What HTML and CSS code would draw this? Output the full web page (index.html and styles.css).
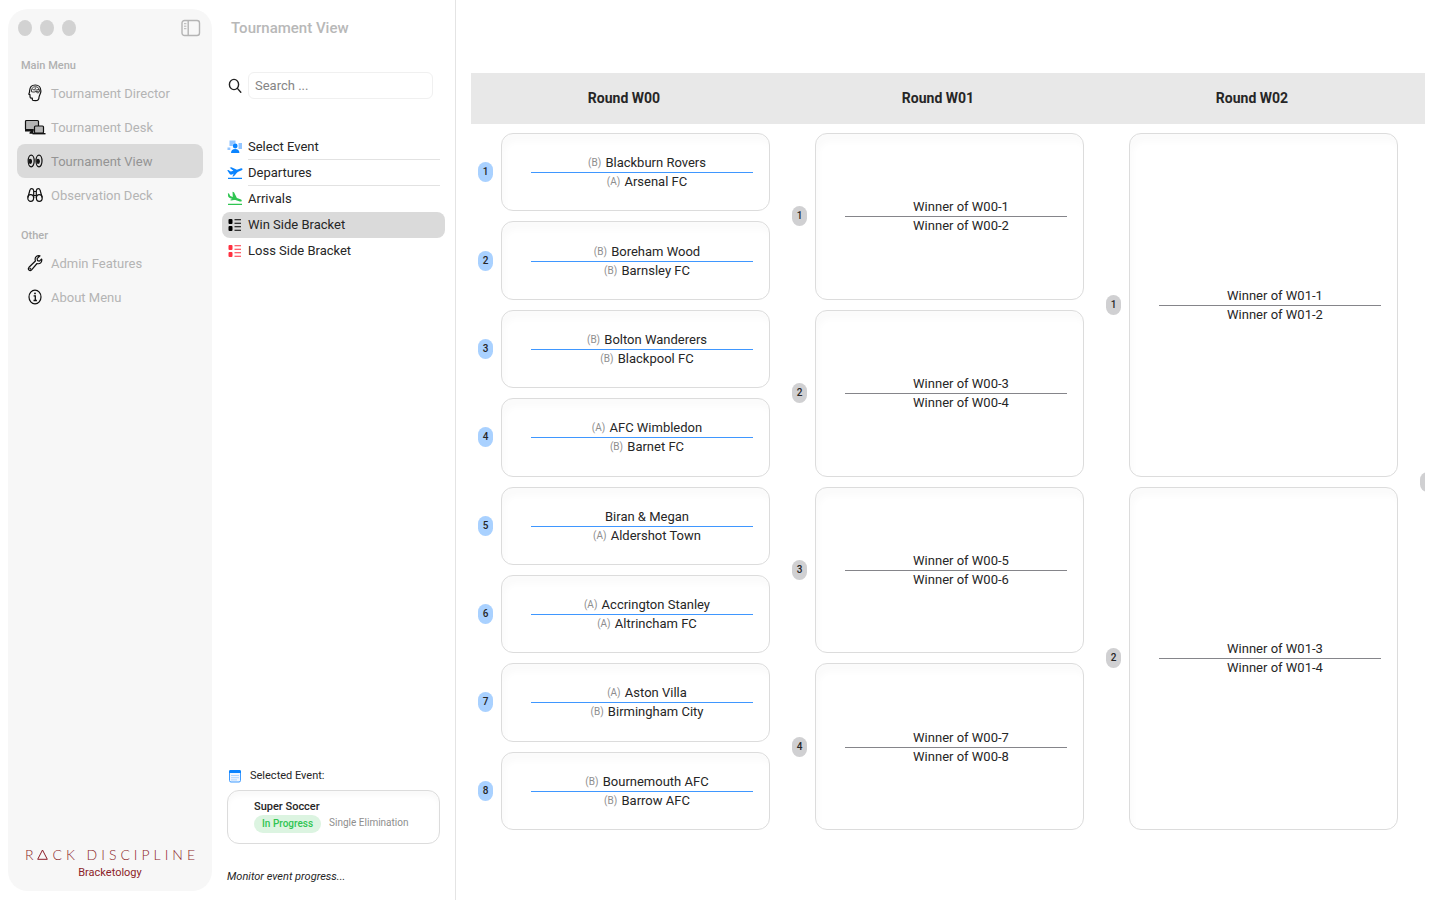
FILE: index.html
```html
<!DOCTYPE html>
<html lang="en">
<head>
    <meta charset="UTF-8">
    <meta name="viewport" content="width=device-width, initial-scale=1.0">
    <title>Tournament View</title>
    <link rel="stylesheet" href="styles.css">
</head>
<body>
    <aside class="sidebar">
        <div class="window-bar">
            <span class="dot"></span>
            <span class="dot"></span>
            <span class="dot"></span>
            <button class="toggle" aria-label="Toggle sidebar">
                <svg width="20" height="18" viewBox="0 0 20 18" fill="none" stroke="#b4b4b4" stroke-width="1.4">
                    <rect x="1" y="1.5" width="17.5" height="15" rx="2.5"/>
                    <path d="M7.2 1.5v15"/>
                    <path d="M3 4.7h2.4M3 7.2h2.4M3 9.7h2.4" stroke-width="1"/>
                </svg>
            </button>
        </div>

        <h2>Main Menu</h2>
        <nav>
            <a href="#">
                <svg width="22" height="18" viewBox="0 0 22 18" fill="none" stroke="#111" stroke-width="1.2">
                    <path d="M8.5 16.2c-.2-.7-.2-1.400-.2-2.100-1.200.2-2 0-2.200-1l-.2-2.500-1.100-.5c.5-1.300.8-1.900.8-3.200C5.800 3.300 8.200 1 11.300 1c3.400 0 5.600 2.600 5.600 6 0 2.700-1.700 3.800-1.900 6.200 0 2-.8 3.500-3.500 3.500-1.500 0-2.500 0-3-.5z" stroke-linejoin="round"/>
                    <path d="M7.500 7.800c-.5-2.800 1-5 3.700-5.100 2.600-.1 4.400 1.800 4.300 4.200-.1 1.500-1 2.200-2.300 2L12 7.500l-2 .6zM8.500 5.500l2.200.5 1-2.500M11.500 6.200l3.500-.8M12 7.500l2.800-.3" stroke-width=".8"/>
                </svg>
                Tournament Director
            </a>
            <a href="#">
                <svg width="22" height="18" viewBox="0 0 22 18">
                    <rect x="1.500" y="2.500" width="13" height="9.500" rx="1" fill="#b5b5b5" stroke="#111" stroke-width="1.2"/>
                    <path d="M1 11h8.500v4.800H5.500v-1.300l1.200-1H1z" fill="#111"/>
                    <rect x="10.500" y="8" width="9" height="7" rx="1" fill="#b5b5b5" stroke="#111" stroke-width="1.2"/>
                    <path d="M8.500 15h13v1.400h-13z" fill="#111"/>
                </svg>
                Tournament Desk
            </a>
            <a href="#" class="active">
                <svg width="22" height="18" viewBox="0 0 22 18" fill="none" stroke="#111" stroke-width="1.2">
                    <ellipse cx="7.200" cy="9" rx="3" ry="5.800"/>
                    <ellipse cx="15" cy="9" rx="3" ry="5.800"/>
                    <ellipse cx="6.300" cy="9.300" rx="1.200" ry="2" fill="#111"/>
                    <ellipse cx="14.100" cy="9.300" rx="1.200" ry="2" fill="#111"/>
                </svg>
                Tournament View
            </a>
            <a href="#">
                <svg width="22" height="18" viewBox="0 0 22 18" fill="none" stroke="#111" stroke-width="1.2">
                    <ellipse cx="6.700" cy="12" rx="2.900" ry="3.400"/>
                    <ellipse cx="15.300" cy="12" rx="2.900" ry="3.400"/>
                    <path d="M3.900 11.500 5.800 4.500C6.300 2 9.500 2 9.700 4.700V12M18.100 11.500l-1.900-7c-.5-2.500-3.700-2.500-3.900.2V12M9.700 5.500h2.600M9.700 9.500h2.600"/>
                </svg>
                Observation Deck
            </a>
        </nav>

        <h2>Other</h2>
        <nav>
            <a href="#">
                <svg width="22" height="18" viewBox="0 0 22 18" fill="none" stroke="#111" stroke-width="1.2" stroke-linejoin="round">
                    <path d="M16 1.800c-2.500-.8-4.900.9-4.900 3.300 0 .7.100 1.300.3 1.900L5 13.300c-.8.900-.7 2.100 0 2.800.8.700 1.800.6 2.600-.3L13 9.500c3 1 5.300-1.300 4.700-4.500l-2.300 2.100-1.900-.5-.4-2z"/>
                    <circle cx="6.300" cy="14.700" r=".4"/>
                </svg>
                Admin Features
            </a>
            <a href="#">
                <svg width="22" height="18" viewBox="0 0 22 18" fill="none" stroke="#111" stroke-width="1.2">
                    <ellipse cx="11" cy="9" rx="6" ry="6.800"/>
                    <path d="M9.600 7.800h1.700v4.600M9.500 12.500h3.400" stroke-width="1.3"/>
                    <circle cx="11" cy="5.400" r=".9" fill="#111" stroke="none"/>
                </svg>
                About Menu
            </a>
        </nav>

        <div class="brand">
            <div class="wordmark">R<svg width="11" height="11" viewBox="0 0 11 11" fill="none" stroke="#8c1d28"><path d="M5.500 1 10.300 10.300H.7z"/></svg>CK DISCIPLINE</div>
            <div class="product">Bracketology</div>
        </div>
    </aside>

    <section class="panel">
        <h1>Tournament View</h1>

        <div class="search">
            <label for="search" aria-label="Search">
                <svg width="14" height="16" viewBox="0 0 14 16" fill="none" stroke="#222" stroke-width="1.4" stroke-linecap="round">
                    <ellipse cx="6" cy="6.500" rx="4.600" ry="5.100"/>
                    <path d="m9.400 10.400 3.400 3.800"/>
                </svg>
            </label>
            <input type="text" id="search" placeholder="Search ...">
        </div>

        <ul class="event-menu">
            <li>
                <a href="#">
                    <svg width="16" height="16" viewBox="0 0 16 16">
                        <path d="M2.500 1.500h6v3.200H5.800V7H2.500zM11.500 4H15v6h-3.500zM.5 8.500h2.800v2.500H.5z" fill="#93c5ff"/>
                        <circle cx="8.200" cy="7" r="2.400" fill="#0a84ff"/>
                        <path d="M4 14c0-2.700 1.600-4 4.200-4s4.200 1.300 4.200 4z" fill="#0a84ff"/>
                    </svg>
                    <span>Select Event</span>
                </a>
            </li>
            <li>
                <a href="#">
                    <svg width="16" height="16" viewBox="0 0 16 16" fill="#0a84ff">
                        <path d="M1 12.800h14v1.300H1zM.2 5.200l1.200-.3 2.400 1.700 2.600-.8L2.700 2.700l1.700-.5 5.500 2.500 3.600-1.300c1-.3 1.900 0 2 .6.100.7-.5 1.200-1.400 1.500L5 9.600c-1 .3-1.700.1-2.300-.6z"/>
                        <path d="m10.800 6.700-3.900 4.600-1.500.4 2-4.900z"/>
                    </svg>
                    <span>Departures</span>
                </a>
            </li>
            <li>
                <a href="#">
                    <svg width="16" height="16" viewBox="0 0 16 16" fill="#30c552">
                        <path d="M1 12.800h14v1.300H1zM.9 2.200l1.100.3 1.300 2.600 2.500.8L5.500.7l1.500.5 2.900 5.800 3.500 1.300c1 .4 1.600 1.100 1.300 1.700-.2.600-1 .7-1.900.4L3.300 7.300C2 6.900 1.200 6.200 1.100 5.100z"/>
                        <path d="m9.800 8.500-5.600 1.100-1.200-.5 4.200-2.300z"/>
                    </svg>
                    <span>Arrivals</span>
                </a>
            </li>
            <li>
                <a href="#" class="active">
                    <svg width="16" height="16" viewBox="0 0 16 16" fill="#000">
                        <rect x="1.500" y="2" width="4" height="5" rx="1"/>
                        <rect x="1.500" y="9" width="4" height="5" rx="1"/>
                        <path d="M7.500 2.300H14v1H7.500zM7.500 5.700H14v1H7.500zM7.500 9.300H14v1H7.500zM7.500 12.700H14v1H7.500z"/>
                    </svg>
                    <span>Win Side Bracket</span>
                </a>
            </li>
            <li>
                <a href="#">
                    <svg width="16" height="16" viewBox="0 0 16 16" fill="#ff3040">
                        <rect x="1.500" y="2" width="4" height="5" rx="1"/>
                        <rect x="1.500" y="9" width="4" height="5" rx="1"/>
                        <path d="M7.500 2.300H14v1H7.500zM7.500 5.700H14v1H7.500zM7.500 9.300H14v1H7.500zM7.500 12.700H14v1H7.500z"/>
                    </svg>
                    <span>Loss Side Bracket</span>
                </a>
            </li>
        </ul>

        <div class="selected-title">
            <svg width="14" height="14" viewBox="0 0 14 14">
                <rect x="1.500" y="1.500" width="11" height="11.500" rx="1.500" fill="#eef6ff" stroke="#3f9bff"/>
                <path d="M1 2.500C1 1.500 1.600 1 2.500 1h9c.9 0 1.500.5 1.500 1.500V4H1z" fill="#0a84ff"/>
                <path d="M3.500 6.500h7.500M3.500 8.700h7.500M3.500 10.900h6" stroke="#6ab2ff" stroke-dasharray="1 1"/>
            </svg>
            <span>Selected Event:</span>
        </div>
        <div class="selected-card">
            <strong>Super Soccer</strong>
            <div class="selected-info">
                <span class="status">In Progress</span>
                <span class="format">Single Elimination</span>
            </div>
        </div>
        <p class="hint">Monitor event progress...</p>
    </section>

    <main class="board">
        <div class="round-titles">
            <h3>Round W00</h3>
            <h3>Round W01</h3>
            <h3>Round W02</h3>
        </div>

        <div class="rounds">
            <div class="round ready">
                <div class="match">
                    <span class="number">1</span>
                    <div class="card">
                        <p><small>(B)</small> Blackburn Rovers</p>
                        <p><small>(A)</small> Arsenal FC</p>
                    </div>
                </div>
                <div class="match">
                    <span class="number">2</span>
                    <div class="card">
                        <p><small>(B)</small> Boreham Wood</p>
                        <p><small>(B)</small> Barnsley FC</p>
                    </div>
                </div>
                <div class="match">
                    <span class="number">3</span>
                    <div class="card">
                        <p><small>(B)</small> Bolton Wanderers</p>
                        <p><small>(B)</small> Blackpool FC</p>
                    </div>
                </div>
                <div class="match">
                    <span class="number">4</span>
                    <div class="card">
                        <p><small>(A)</small> AFC Wimbledon</p>
                        <p><small>(B)</small> Barnet FC</p>
                    </div>
                </div>
                <div class="match">
                    <span class="number">5</span>
                    <div class="card">
                        <p>Biran &amp; Megan</p>
                        <p><small>(A)</small> Aldershot Town</p>
                    </div>
                </div>
                <div class="match">
                    <span class="number">6</span>
                    <div class="card">
                        <p><small>(A)</small> Accrington Stanley</p>
                        <p><small>(A)</small> Altrincham FC</p>
                    </div>
                </div>
                <div class="match">
                    <span class="number">7</span>
                    <div class="card">
                        <p><small>(A)</small> Aston Villa</p>
                        <p><small>(B)</small> Birmingham City</p>
                    </div>
                </div>
                <div class="match">
                    <span class="number">8</span>
                    <div class="card">
                        <p><small>(B)</small> Bournemouth AFC</p>
                        <p><small>(B)</small> Barrow AFC</p>
                    </div>
                </div>
            </div>

            <div class="round">
                <div class="match">
                    <span class="number">1</span>
                    <div class="card">
                        <p>Winner of W00-1</p>
                        <p>Winner of W00-2</p>
                    </div>
                </div>
                <div class="match">
                    <span class="number">2</span>
                    <div class="card">
                        <p>Winner of W00-3</p>
                        <p>Winner of W00-4</p>
                    </div>
                </div>
                <div class="match">
                    <span class="number">3</span>
                    <div class="card">
                        <p>Winner of W00-5</p>
                        <p>Winner of W00-6</p>
                    </div>
                </div>
                <div class="match">
                    <span class="number">4</span>
                    <div class="card">
                        <p>Winner of W00-7</p>
                        <p>Winner of W00-8</p>
                    </div>
                </div>
            </div>

            <div class="round">
                <div class="match">
                    <span class="number">1</span>
                    <div class="card">
                        <p>Winner of W01-1</p>
                        <p>Winner of W01-2</p>
                    </div>
                </div>
                <div class="match">
                    <span class="number">2</span>
                    <div class="card">
                        <p>Winner of W01-3</p>
                        <p>Winner of W01-4</p>
                    </div>
                </div>
            </div>

            <div class="round">
                <div class="match">
                    <span class="number"></span>
                </div>
            </div>
        </div>
    </main>
</body>
</html>
```
FILE: styles.css
```css
* {
    box-sizing: border-box;
}

body {
    font-family: Roboto, "Liberation Sans", sans-serif;
    font-size: 13px;
    color: #262626;
    background-color: #ffffff;
    margin: 0;
    display: flex;
    min-height: 100vh;
}

h1, h2, h3, p, ul {
    margin: 0;
    padding: 0;
}

a {
    color: inherit;
    text-decoration: none;
}

/* left sidebar */
.sidebar {
    flex: 0 0 204px;
    min-width: 0;
    display: flex;
    flex-direction: column;
    margin: 9px 0 9px 8px;
    padding: 9px;
    background-color: #f7f7f7;
    border-radius: 20px;
}

.window-bar {
    display: flex;
    align-items: center;
    gap: 8px;
    height: 20px;
    padding: 0 2px 0 1px;
    margin-bottom: 18px;
}

.dot {
    width: 14px;
    height: 16px;
    border-radius: 50%;
    background-color: #d2d2d2;
}

.toggle {
    margin-left: auto;
    padding: 0;
    border: none;
    background: none;
    height: 18px;
    cursor: pointer;
}

.sidebar h2 {
    font-size: 11px;
    font-weight: 500;
    line-height: 20px;
    color: #b0b0b0;
    padding-left: 4px;
}

.sidebar nav {
    margin-bottom: 14px;
}

.sidebar nav a {
    display: flex;
    align-items: center;
    gap: 5px;
    height: 34px;
    padding-left: 7px;
    color: #b4b4b4;
    border-radius: 8px;
}

.sidebar nav a.active {
    background-color: #dadada;
    color: #949494;
}

.brand {
    margin-top: auto;
    text-align: center;
    color: #8c1d28;
}

.wordmark {
    font-family: Lato, sans-serif;
    font-weight: 300;
    font-size: 14px;
    line-height: 18px;
    letter-spacing: 4px;
    padding-left: 4px;
    white-space: nowrap;
}

.wordmark svg {
    margin-right: 4px;
}

.product {
    font-size: 11px;
    line-height: 18px;
}

/* event panel */
.panel {
    flex: 0 0 244px;
    min-width: 0;
    display: flex;
    flex-direction: column;
    padding: 18px 10px 14px;
    border-right: 1px solid #e4e4e4;
}

.panel h1 {
    font-size: 15px;
    font-weight: 500;
    line-height: 20px;
    color: #b8b8b8;
    padding-left: 9px;
}

.search {
    display: flex;
    align-items: center;
    gap: 6px;
    margin: 34px 12px 35px 6px;
}

.search label {
    display: flex;
}

.search input {
    flex: 1;
    min-width: 0;
    height: 27px;
    padding: 0 6px;
    font-family: inherit;
    font-size: 13px;
    border: 1px solid #f0f0f0;
    border-radius: 6px;
    outline: none;
}

.search input::placeholder {
    color: #858585;
}

.event-menu {
    list-style: none;
    margin-bottom: auto;
}

.event-menu a {
    display: flex;
    align-items: center;
    gap: 5px;
    height: 26px;
    padding: 0 5px;
    border-radius: 8px;
}

.event-menu span {
    flex: 1;
    line-height: 25px;
    border-bottom: 1px solid transparent;
}

.event-menu li:nth-child(-n+2) span {
    border-color: #e2e2e2;
}

.event-menu a.active {
    background-color: #dadada;
}

.selected-title {
    display: flex;
    align-items: center;
    gap: 8px;
    font-size: 11px;
    line-height: 16px;
    padding-left: 6px;
    margin-bottom: 6px;
}

.selected-card {
    height: 54px;
    margin: 0 5px 24px 5px;
    padding: 8px 10px 8px 26px;
    border: 1px solid #dcdcdc;
    border-radius: 12px;
    box-shadow: inset 0 5px 5px #fafafa;
}

.selected-card strong {
    display: block;
    font-size: 11px;
    font-weight: 500;
    line-height: 16px;
}

.selected-info {
    display: flex;
    gap: 8px;
    white-space: nowrap;
}

.status {
    font-size: 10px;
    font-weight: 500;
    line-height: 18px;
    padding: 0 8px;
    color: #30c552;
    background-color: #dcf4e1;
    border-radius: 9px;
}

.format {
    font-size: 10px;
    line-height: 16px;
    color: #8e8e8e;
}

.hint {
    font-size: 11px;
    font-style: italic;
    line-height: 18px;
    padding-left: 5px;
}

/* bracket board */
.board {
    flex: 1;
    min-width: 0;
    display: flex;
    flex-direction: column;
    margin: 73px 15px 70px;
    overflow: hidden;
}

.round-titles {
    display: flex;
    background-color: #e8e8e8;
    margin-bottom: 9px;
}

/* three rounds fit, the next one peeks in on the right */
.round-titles h3,
.round {
    flex: 0 0 calc((100% - 12px) / 3);
}

.round-titles h3 {
    padding-right: 8px;
    font-size: 14px;
    font-weight: 700;
    line-height: 51px;
    text-align: center;
}

.rounds {
    flex: 1;
    display: flex;
}

.round {
    display: flex;
    flex-direction: column;
    gap: 10px;
    padding: 0 15px 0 7px;
}

.match {
    flex: 1;
    display: flex;
    align-items: center;
    gap: 8px;
}

.number {
    flex: 0 0 15px;
    height: 20px;
    border-radius: 8px;
    background-color: #d0d0d2;
    font-size: 10px;
    font-weight: 500;
    line-height: 20px;
    text-align: center;
}

.card {
    flex: 1;
    align-self: stretch;
    display: flex;
    flex-direction: column;
    justify-content: center;
    padding: 1px 16px 0 29px;
    border: 1px solid #dcdcdc;
    border-radius: 12px;
    box-shadow: inset 3px 8px 6px #fbfbfb;
}

.card p {
    line-height: 18px;
    padding-left: 10px;
    text-align: center;
}

.card p:first-child {
    border-bottom: 1px solid #85858a;
}

.card small {
    font-size: 10px;
    color: #8e8e8e;
    margin-right: 1px;
    vertical-align: 1px;
}

.ready .number {
    background-color: #a9d1ff;
}

.ready .card p:first-child {
    border-color: #3f97ff;
}
```
